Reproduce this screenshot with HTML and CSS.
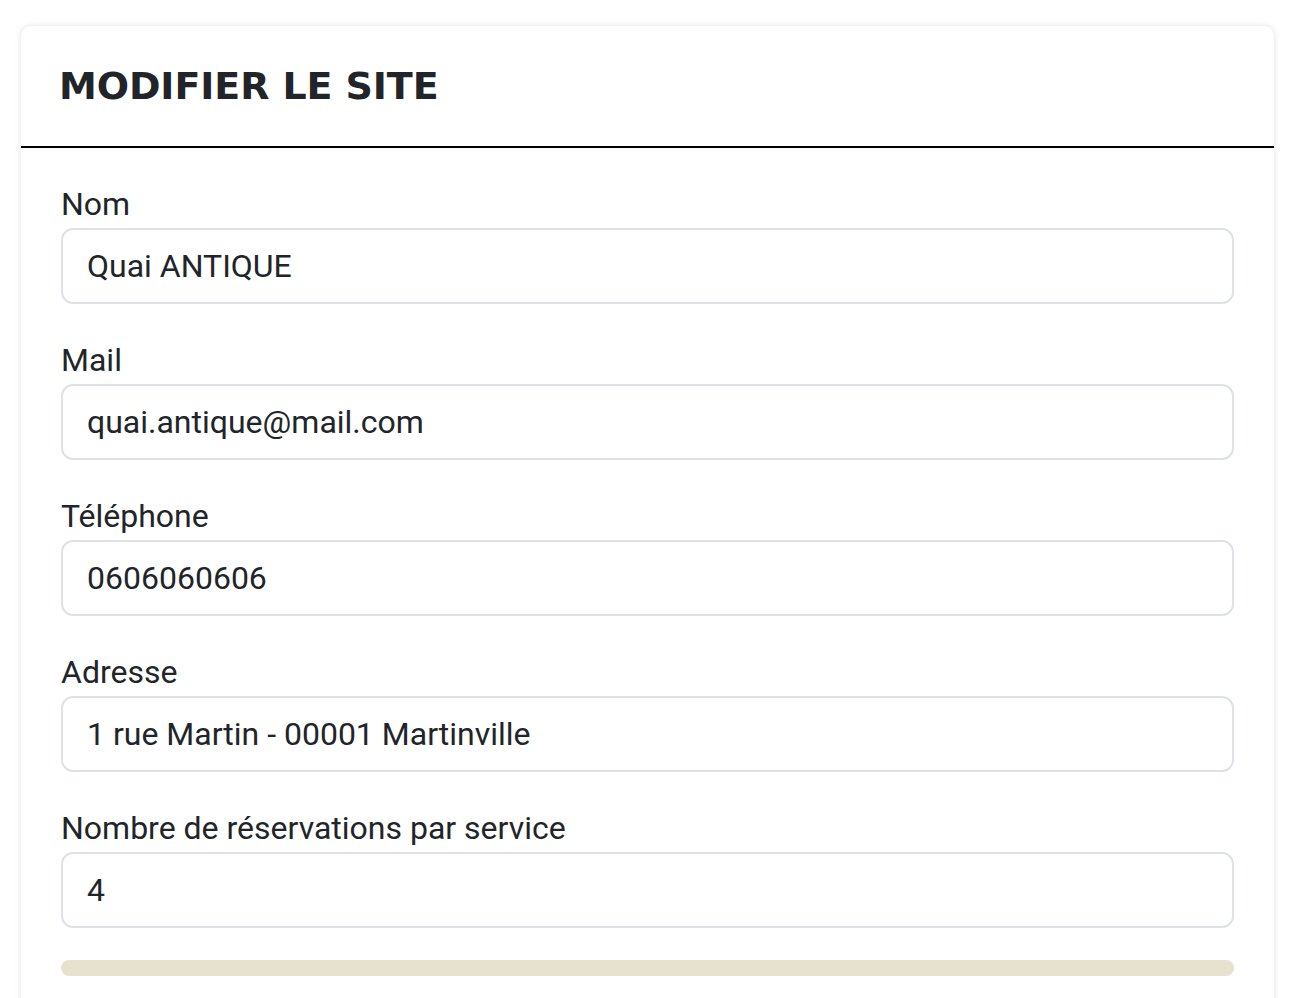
FILE: index.html
```html
<!DOCTYPE html>
<html lang="fr">
<head>
<meta charset="utf-8">
<title>Modifier le site</title>
<link rel="stylesheet" href="styles.css">
</head>
<body>
<main class="page">
  <section class="card">
    <header class="card-header">
      <h1 class="card-title">MODIFIER LE SITE</h1>
    </header>
    <form class="card-body">
      <div class="field">
        <label class="field-label" for="nom">Nom</label>
        <input class="field-input" id="nom" type="text" value="Quai ANTIQUE">
      </div>
      <div class="field">
        <label class="field-label" for="mail">Mail</label>
        <input class="field-input" id="mail" type="text" value="quai.antique@mail.com">
      </div>
      <div class="field">
        <label class="field-label" for="tel">Téléphone</label>
        <input class="field-input" id="tel" type="text" value="0606060606">
      </div>
      <div class="field">
        <label class="field-label" for="adresse">Adresse</label>
        <input class="field-input" id="adresse" type="text" value="1 rue Martin - 00001 Martinville">
      </div>
      <div class="field">
        <label class="field-label" for="nb">Nombre de réservations par service</label>
        <input class="field-input" id="nb" type="text" value="4">
      </div>
      <div class="submit-bar"></div>
    </form>
  </section>
</main>
</body>
</html>
```

FILE: styles.css
```css
* { box-sizing: border-box; }
html, body { margin: 0; padding: 0; background: #fff; }
body {
  font-family: Roboto, "Liberation Sans", sans-serif;
  color: #212529;
  overflow: hidden;
  height: 998px;
}
.page {
  padding: 26px 24px 0 21px;
}
.card {
  background: #fff;
  border-radius: 10px;
  box-shadow: 0 0 6px rgba(0,0,0,0.12);
  height: 1100px;
}
.card-header {
  height: 122px;
  padding: 0 40px 0 38px;
  display: flex;
  align-items: center;
  border-bottom: 2px solid #000;
}
.card-title {
  margin: 0;
  font-family: "DejaVu Sans", sans-serif;
  font-weight: 700;
  font-size: 38px;
  letter-spacing: -0.1px;
  color: #212529;
  line-height: 1;
}
.card-body {
  padding: 32px 40px 0;
  display: flex;
  flex-direction: column;
}
.field {
  display: flex;
  flex-direction: column;
  margin-bottom: 32px;
}
.field-label {
  font-size: 32px;
  line-height: 48px;
  height: 48px;
}
.field-input {
  height: 76px;
  border: 2px solid #dee2e6;
  border-radius: 12px;
  padding: 0 24px;
  font-family: Roboto, "Liberation Sans", sans-serif;
  font-size: 32px;
  color: #212529;
  background: #fff;
  outline: none;
}
.submit-bar {
  height: 16px;
  border-radius: 8px;
  background: #e7e1cf;
}
```
